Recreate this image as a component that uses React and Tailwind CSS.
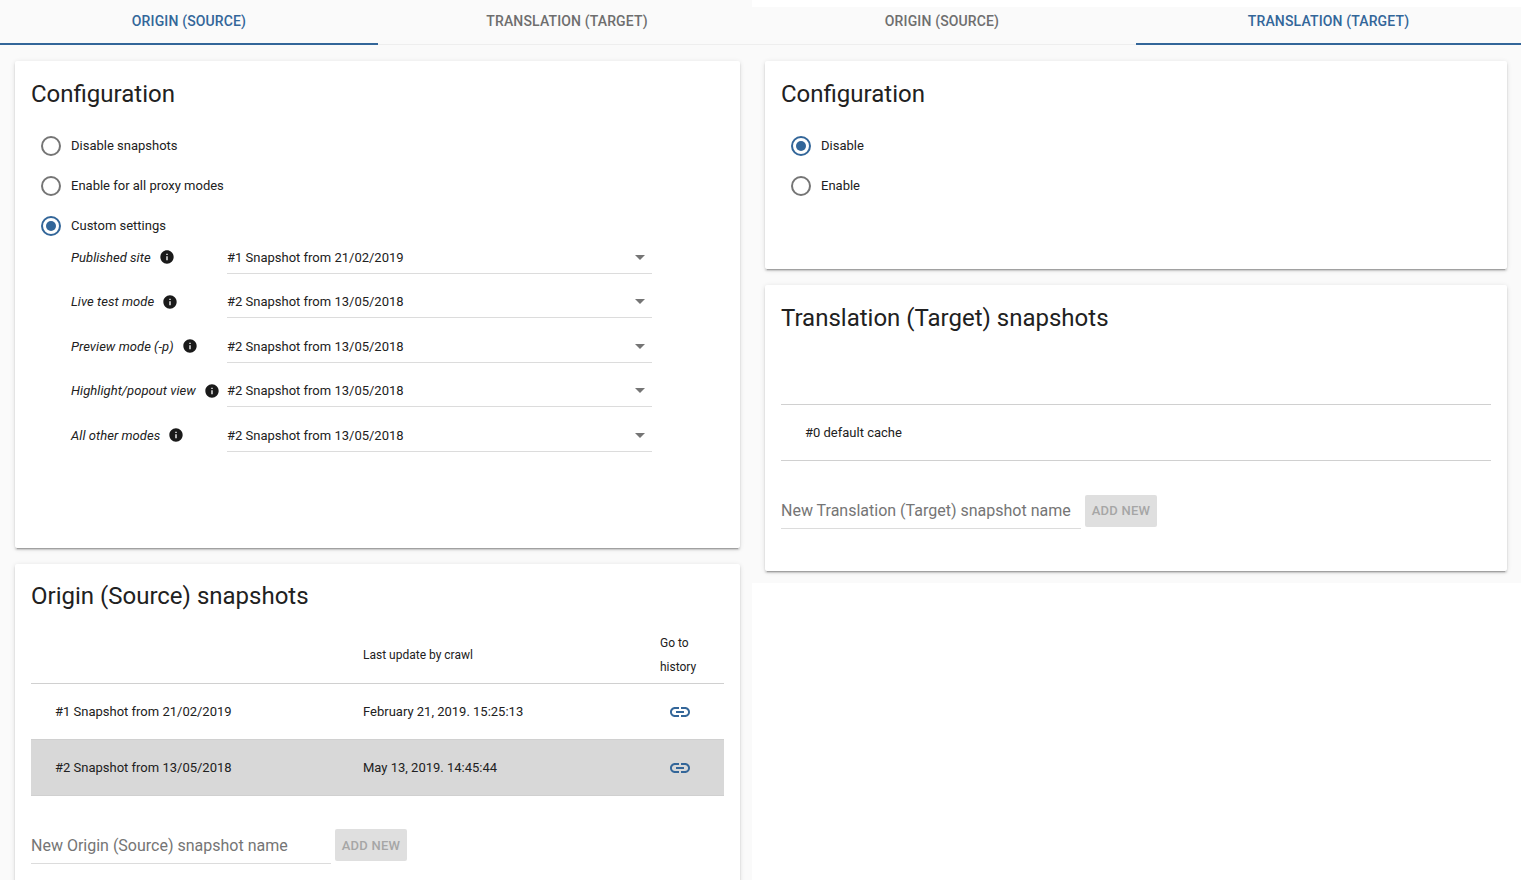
const PRIMARY = "#336699";

function Tab({ label, active, width, shift }) {
  return (
    <div
      className={
        (active
          ? "h-[45px] flex items-center justify-center pb-[1px] border-b-2 border-[#336699] text-[#336699] text-sm tracking-[0.14px] font-medium shrink-0"
          : "h-[45px] flex items-center justify-center pb-[2px] border-b border-[#eeeeee] text-[#6e6e6e] text-sm tracking-[0.14px] font-medium shrink-0") +
        (shift ? " pr-1" : "")
      }
      style={{ width }}
    >
      {label}
    </div>
  );
}

function Radio({ label, checked }) {
  return (
    <div className="h-10 flex items-center pl-[10px]">
      <span
        className={
          checked
            ? "w-5 h-5 rounded-full border-2 border-[#336699] flex items-center justify-center"
            : "w-5 h-5 rounded-full border-2 border-[#757575] flex items-center justify-center"
        }
      >
        {checked && <span className="w-[10px] h-[10px] rounded-full bg-[#336699]" />}
      </span>
      <span className="ml-[10px] text-[13px] text-[#212121]">{label}</span>
    </div>
  );
}

function InfoIcon() {
  return (
    <svg viewBox="0 0 24 24" className="w-4 h-4 ml-2 shrink-0" fill="#1a1a1a">
      <path d="M12 2C6.48 2 2 6.48 2 12s4.48 10 10 10 10-4.48 10-10S17.52 2 12 2zm1 15h-2v-6h2v6zm0-8h-2V7h2v2z" />
    </svg>
  );
}

function LinkIcon() {
  return (
    <svg viewBox="0 0 24 24" className="w-6 h-6" fill={PRIMARY}>
      <path d="M3.9 12c0-1.71 1.39-3.1 3.1-3.1h4V7H7c-2.76 0-5 2.24-5 5s2.24 5 5 5h4v-1.9H7c-1.71 0-3.1-1.39-3.1-3.1zM8 13h8v-2H8v2zm9-6h-4v1.9h4c1.71 0 3.1 1.39 3.1 3.1s-1.39 3.1-3.1 3.1h-4V17h4c2.76 0 5-2.24 5-5s-2.24-5-5-5z" />
    </svg>
  );
}

function SelectRow({ label, value }) {
  return (
    <div className="flex h-[28px]">
      <div className="w-[156px] h-[23px] flex items-center italic text-[13px] tracking-[0.05px] text-[#212121]">
        <span className="whitespace-nowrap">{label}</span>
        <InfoIcon />
      </div>
      <div className="w-[425px] flex items-start justify-between border-b border-[#dcdcdc] h-[28px]">
        <span className="text-[13px] leading-[23px] text-[#212121]">{value}</span>
        <span className="mt-[9px] mr-[7px] w-0 h-0 border-l-[5px] border-r-[5px] border-t-[5px] border-l-transparent border-r-transparent border-t-[#757575]" />
      </div>
    </div>
  );
}

function Card({ title, className, titleClass, children }) {
  return (
    <div
      className={
        "bg-white rounded-[2px] p-4 shadow-[0_2px_2px_0_rgba(0,0,0,0.14),0_3px_1px_-2px_rgba(0,0,0,0.2),0_1px_5px_0_rgba(0,0,0,0.12)] " +
        className
      }
    >
      <h2 className={"text-2xl leading-8 text-[#212121] " + (titleClass || "")}>{title}</h2>
      {children}
    </div>
  );
}

function AddNew({ placeholder, tall }) {
  return (
    <div className="flex items-start gap-1">
      <div
        className={
          tall
            ? "w-[300px] h-[35px] border-b border-[#dcdcdc] text-base leading-[33px] text-[#757575]"
            : "w-[300px] h-[34px] border-b border-[#dcdcdc] text-base leading-[31px] text-[#757575]"
        }
      >
        {placeholder}
      </div>
      <button
        className={
          tall
            ? "w-[72px] h-8 pt-[1px] rounded-[2px] bg-[#dfdfdf] text-[#a6a6a6] text-[13px] tracking-[0.25px] font-medium"
            : "w-[72px] h-8 rounded-[2px] bg-[#dfdfdf] text-[#a6a6a6] text-[13px] tracking-[0.25px] font-medium"
        }
      >
        ADD NEW
      </button>
    </div>
  );
}

function SnapshotRow({ name, date, selected }) {
  return (
    <div
      className={
        selected
          ? "flex items-center h-14 bg-[#d8d8d8] border-b border-[#d0d0d0] text-[13px] text-[#212121]"
          : "flex items-center h-14 border-b border-[#d0d0d0] text-[13px] text-[#212121]"
      }
    >
      <div className="w-[332px] pl-6">{name}</div>
      <div className="w-[297px]">{date}</div>
      <div className="pl-2 flex"><LinkIcon /></div>
    </div>
  );
}

export default function App() {
  return (
    <div className="flex items-start w-[1524px] h-[880px] overflow-hidden bg-white font-['Roboto',sans-serif]">
      <div className="w-[752px] h-[880px] overflow-hidden bg-[#fafafa] shrink-0">
        <div className="flex">
          <Tab label="ORIGIN (SOURCE)" active width={378} />
          <Tab label="TRANSLATION (TARGET)" width={378} />
        </div>
        <div className="pl-[15px] pt-4 w-[740px]">
          <Card title="Configuration" className="h-[487px]" titleClass="pt-[1px]">
            <div className="mt-4">
              <Radio label="Disable snapshots" />
              <Radio label="Enable for all proxy modes" />
              <Radio label="Custom settings" checked />
            </div>
            <div className="flex flex-col gap-[16.5px] pl-10 -mt-[0.25px]">
              <SelectRow label="Published site" value="#1 Snapshot from 21/02/2019" />
              <SelectRow label="Live test mode" value="#2 Snapshot from 13/05/2018" />
              <SelectRow label="Preview mode (-p)" value="#2 Snapshot from 13/05/2018" />
              <SelectRow label="Highlight/popout view" value="#2 Snapshot from 13/05/2018" />
              <SelectRow label="All other modes" value="#2 Snapshot from 13/05/2018" />
            </div>
          </Card>
          <Card title="Origin (Source) snapshots" className="mt-4 h-[340px]">
            <div className="w-[693px] mt-[18px]">
              <div className="flex items-center h-[49px] pb-1 box-content border-b border-[#d0d0d0] text-xs leading-6 text-[#212121]">
                <div className="w-[332px]" />
                <div className="w-[297px]">Last update by crawl</div>
                <div>
                  Go to
                  <br />
                  history
                </div>
              </div>
              <SnapshotRow name="#1 Snapshot from 21/02/2019" date="February 21, 2019. 15:25:13" />
              <SnapshotRow name="#2 Snapshot from 13/05/2018" date="May 13, 2019. 14:45:44" selected />
            </div>
            <div className="mt-[33px]">
              <AddNew placeholder="New Origin (Source) snapshot name" tall />
            </div>
          </Card>
        </div>
      </div>
      <div className="w-[769px] h-[576px] mt-[7px] bg-[#fafafa] shrink-0">
        <div className="flex -mt-[7px] h-[45px]">
          <Tab label="ORIGIN (SOURCE)" width={384} shift />
          <Tab label="TRANSLATION (TARGET)" active width={385} />
        </div>
        <div className="pl-[13px] pt-4 w-[755px]">
          <Card title="Configuration" className="h-[208px]" titleClass="pt-[1px]">
            <div className="mt-4">
              <Radio label="Disable" checked />
              <Radio label="Enable" />
            </div>
          </Card>
          <Card title="Translation (Target) snapshots" className="mt-4 h-[286px]" titleClass="pt-[1px]">
            <div className="mt-[70px] border-t border-[#d0d0d0]">
              <div className="flex items-center h-14 border-b border-[#d0d0d0] text-[13px] text-[#212121] pl-6">
                #0 default cache
              </div>
            </div>
            <div className="mt-[34px]">
              <AddNew placeholder="New Translation (Target) snapshot name" />
            </div>
          </Card>
        </div>
      </div>
    </div>
  );
}
